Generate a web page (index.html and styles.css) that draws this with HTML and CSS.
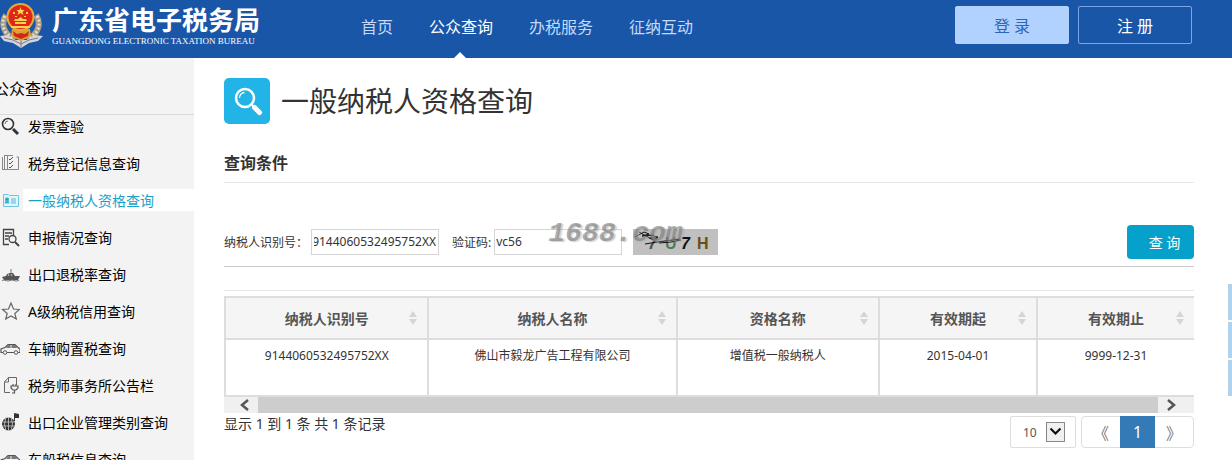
FILE: index.html
```html
<!DOCTYPE html>
<html lang="zh-CN">
  <head>
    <meta charset="UTF-8" />
    <meta name="viewport" content="width=device-width, initial-scale=1.0" />
    <title>广东省电子税务局</title>
    <link rel="stylesheet" href="styles.css">
  </head>
  <body>
    <header class="header">
      <div class="logo">
        <svg class="emblem" viewBox="0 0 44 48" aria-hidden="true">
          <path d="M6 15C0 24 4 34 15 40M36 15c6 9 2 19-9 25" fill="none" stroke="#a99b85" stroke-width="6" />
          <path d="M5 16C0 24 4 34 14 39M37 16c5 8 1 18-9 23" fill="none" stroke="#e6dfcf" stroke-width="3" stroke-dasharray="2 2" />
          <path d="M0 36l8-1 7 5h12l7-5 9 1-5 5-9 2-8 5-8-5-9-2z" fill="#d3d5da" />
          <path d="M4 38l9 2 8 4 8-4 9-2M21 41v6" fill="none" stroke="#747b8b" stroke-width="1" />
          <path d="M12 29h18l1 7-10 5-10-5z" fill="#d8a52f" />
          <path d="M13 31l4 3 4-1 4 1 4-3-1 5-7 3-7-3z" fill="#d3271e" />
          <circle cx="20.500" cy="17" r="14" fill="#e8a83a" />
          <circle cx="20.500" cy="17" r="12" fill="#e0261a" />
          <path d="M20.500 7l1 3h3l-2 2 1 3-3-2-3 2 1-3-2-2h3z" fill="#ffd84a" />
          <path d="M13 12h2v2h-2zM26 12h2v2h-2zM15 16h2v1h-2zM24 16h2v1h-2zM14 21h13l-1-2h-3l-2.500-2-2.500 2h-3zM15 22h11v2H15zM11 26h19v2H11z" fill="#ffd04a" />
        </svg>
        <div class="logo-text">
          <div class="logo-cn">广东省电子税务局</div>
          <div class="logo-en">GUANGDONG ELECTRONIC TAXATION BUREAU</div>
        </div>
      </div>
      <nav class="nav">
        <a href="#">首页</a>
        <a href="#" class="current">公众查询</a>
        <a href="#">办税服务</a>
        <a href="#">征纳互动</a>
      </nav>
      <div class="account">
        <button class="login">登 录</button>
        <button class="register">注 册</button>
      </div>
    </header>

    <div class="page">
      <aside class="sidebar">
        <div class="sidebar-title">公众查询</div>
        <ul class="menu">
          <li>
            <svg class="icon" viewBox="0 0 20 20"><circle cx="8" cy="8" r="5.5" fill="none" stroke="#333" stroke-width="1.6" /><path d="M5 8a3 3 0 0 1 3-3" fill="none" stroke="#777" /><path d="M13 13l5 5" stroke="#333" stroke-width="3" /></svg>
            <a href="#">发票查验</a>
          </li>
          <li>
            <svg class="icon" viewBox="0 0 20 20"><path d="M2.500 4v13M4.500 2v14M5 2.500h8M2 16.500h16.500V4M7.500 3v13M16.500 4h2" fill="none" stroke="#888" /><path d="M9 6l1 1 3-3M9 10l1 1 3-3M9 14l1 1 3-3" fill="none" stroke="#555" /></svg>
            <a href="#">税务登记信息查询</a>
          </li>
          <li class="active">
            <svg class="icon" viewBox="0 0 20 20"><path d="M3.500 4.500h5l1 1h9v11h-15z" fill="#e3f4fa" stroke="#71c4df" /><path d="M5 13c0-3 4-3 4 0zM5.500 8h3v3h-3zM11 9h5M11 11h5M11 13h5" fill="#1a9fc8" stroke="#58b8d7" /></svg>
            <a href="#">一般纳税人资格查询</a>
          </li>
          <li>
            <svg class="icon" viewBox="0 0 20 20"><path d="M9 17.500H3.500v-15h10V8M5 6h7M5 9h4M5 12h3" fill="none" stroke="#444" stroke-width="1.300" /><circle cx="12.500" cy="12" r="3.500" fill="#f3f3f3" stroke="#444" stroke-width="1.300" /><path d="M15 15l4 4" stroke="#444" stroke-width="2" /></svg>
            <a href="#">申报情况查询</a>
          </li>
          <li>
            <svg class="icon" viewBox="0 0 20 20"><path d="M2 13l4-1 1-2 3-1h3l2 3h5l-2 4H4z" fill="#555" /><path d="M11 9V5M7 11h6M2 16.500q2-1 4 0t4 0 4 0 5 0" fill="none" stroke="#777" /><path d="M8 11h1M11 11h1" stroke="#f3f3f3" /></svg>
            <a href="#">出口退税率查询</a>
          </li>
          <li>
            <svg class="icon" viewBox="0 0 20 20"><path d="M11 2l2.500 6 6 .5-4.700 4 1.500 5.500-5.300-3-5.300 3 1.500-5.500L2.500 8.500l6-.5z" fill="none" stroke="#666" stroke-width="1.200" /></svg>
            <a href="#">A级纳税信用查询</a>
          </li>
          <li>
            <svg class="icon" viewBox="0 0 20 20"><path d="M3 14.500H1V11l4-1.500 3-3h7l3 3 2 1.500v3.500h-2M7 14.500h7" fill="none" stroke="#555" stroke-width="1.200" /><path d="M6 10l2.500-3h2v3zM11.500 7H15l2 3h-5.500z" fill="#777" /><circle cx="5" cy="14.500" r="1.800" fill="none" stroke="#555" /><circle cx="16" cy="14.500" r="1.800" fill="none" stroke="#555" /></svg>
            <a href="#">车辆购置税查询</a>
          </li>
          <li>
            <svg class="icon" viewBox="0 0 20 20"><path d="M10 17.500H4.500V7l4-4.500h8V10M4.500 7h4V2.500" fill="none" stroke="#666" /><path d="M11 11h7v2l-2 2h-3l-2-2zM14.500 15v3H12M13 9v2M16 9v2" fill="none" stroke="#555" stroke-width="1.200" /></svg>
            <a href="#">税务师事务所公告栏</a>
          </li>
          <li>
            <svg class="icon" viewBox="0 0 20 20"><circle cx="8.500" cy="12" r="6.500" fill="#333" /><path d="M2 10h13M2 14h13M8.500 5v14M6 5q-3 7 0 14M11 5q3 7 0 14" fill="none" stroke="#ccc" stroke-width=".8" /><path d="M14 9V1l5 1v4h-4v3z" fill="#333" /></svg>
            <a href="#">出口企业管理类别查询</a>
          </li>
          <li>
            <svg class="icon" viewBox="0 0 20 20"><path d="M3 14.500H1V11l4-1.500 3-3h7l3 3 2 1.500v3.500h-2M7 14.500h7" fill="none" stroke="#555" stroke-width="1.200" /><path d="M6 10l2.500-3h2v3zM11.500 7H15l2 3h-5.500z" fill="#777" /></svg>
            <a href="#">车船税信息查询</a>
          </li>
        </ul>
      </aside>

      <main class="content">
        <h1>
          <svg class="title-icon" viewBox="0 0 46 46" aria-hidden="true">
            <rect width="46" height="46" rx="5" fill="#22b4e6" />
            <circle cx="21" cy="20" r="9" fill="none" stroke="#fff" stroke-width="2.500" />
            <path d="M15.500 20a5.500 5.500 0 0 1 5-5.500" fill="none" stroke="#fff" stroke-width="1.300" />
            <path d="M27 26l3 3" stroke="#fff" stroke-width="2" />
            <path d="M30.500 29.500l5 5" stroke="#fff" stroke-width="5" stroke-linecap="round" />
          </svg>
          一般纳税人资格查询
        </h1>
        <h2>查询条件</h2>

        <form class="search">
          <label for="taxId">纳税人识别号：</label>
          <input type="text" id="taxId" class="tax-id" value="9144060532495752XX" />
          <label for="code" class="code-label">验证码:</label>
          <div class="code-box">
            <input type="text" id="code" value="vc56" />
            <span class="watermark">1688.com</span>
          </div>
          <svg class="captcha" viewBox="0 0 85 26">
            <rect width="85" height="26" fill="#c0c0c0" />
            <g font-family="Liberation Sans, sans-serif" font-weight="bold" font-size="16">
              <text x="15" y="20" fill="#46534c" font-style="italic">7</text>
              <text x="32" y="20" fill="#527a5b">U</text>
              <text x="48" y="20" fill="#111" font-style="italic">7</text>
              <text x="64" y="20" fill="#695016">H</text>
            </g>
            <path d="M2 8l9-5 5 2-7 2 12-1M6 3l14 8 5-3-10-2M12 15l12-2 23-3M26 14l12-1 10-2" fill="none" stroke="#111" />
          </svg>
          <button type="button" class="query">查 询</button>
        </form>

        <div class="result">
          <table>
            <thead>
              <tr>
                <th class="col-id">纳税人识别号<svg class="sort" viewBox="0 0 8 14"><path d="M0 6l4-6 4 6zM0 8h8l-4 6z" /></svg></th>
                <th class="col-name">纳税人名称<svg class="sort" viewBox="0 0 8 14"><path d="M0 6l4-6 4 6zM0 8h8l-4 6z" /></svg></th>
                <th class="col-type">资格名称<svg class="sort" viewBox="0 0 8 14"><path d="M0 6l4-6 4 6zM0 8h8l-4 6z" /></svg></th>
                <th class="col-date">有效期起<svg class="sort" viewBox="0 0 8 14"><path d="M0 6l4-6 4 6zM0 8h8l-4 6z" /></svg></th>
                <th>有效期止<svg class="sort" viewBox="0 0 8 14"><path d="M0 6l4-6 4 6zM0 8h8l-4 6z" /></svg></th>
              </tr>
            </thead>
            <tbody>
              <tr>
                <td>9144060532495752XX</td>
                <td>佛山市毅龙广告工程有限公司</td>
                <td>增值税一般纳税人</td>
                <td>2015-04-01</td>
                <td>9999-12-31</td>
              </tr>
            </tbody>
          </table>
          <div class="scrollbar">
            <button aria-label="向左"><svg viewBox="0 0 10 12"><path d="M9 1L3 6l6 5" /></svg></button>
            <div class="thumb"></div>
            <button aria-label="向右"><svg viewBox="0 0 10 12"><path d="M1 1l6 5-6 5" /></svg></button>
          </div>
        </div>

        <div class="table-footer">
          <div class="info">显示 1 到 1 条 共 1 条记录</div>
          <div class="length">
            <select aria-label="每页条数">
              <option>10</option>
              <option>25</option>
              <option>50</option>
            </select>
            <svg class="arrow" viewBox="0 0 19 20"><rect x=".5" y=".5" width="18" height="19" fill="#f0f0f0" stroke="#888" /><path d="M4.500 6.500l5 5 5-5" fill="none" stroke="#111" stroke-width="2.200" /></svg>
          </div>
          <div class="pager">
            <a href="#">《</a>
            <a href="#" class="on">1</a>
            <a href="#">》</a>
          </div>
        </div>
      </main>
    </div>

    <div class="side-tools">
      <span></span>
      <span></span>
      <span></span>
    </div>
  </body>
</html>
```
FILE: styles.css
```css
* {
  box-sizing: border-box;
}
body {
  margin: 0;
  height: 100vh;
  overflow: hidden;
  display: flex;
  flex-direction: column;
  font-family: "Noto Sans", "Noto Sans CJK SC", sans-serif;
  font-size: 12px;
  color: #333;
  background: #fff;
}
a {
  text-decoration: none;
  color: inherit;
}
button,
input,
select {
  font-family: inherit;
  font-size: inherit;
  color: inherit;
}

/* header */
.header {
  flex: none;
  display: flex;
  height: 58px;
  padding-right: 40px;
  background: #1956a8;
}
.logo {
  display: flex;
  width: 361px;
  gap: 8px;
  color: #fff;
}
.emblem {
  width: 44px;
  height: 48px;
}
.logo-text {
  padding-top: 6px;
  white-space: nowrap;
}
.logo-cn {
  font-size: 26px;
  font-weight: bold;
  line-height: 29px;
}
.logo-en {
  font-family: "Liberation Serif", serif;
  font-size: 9px;
  line-height: 12px;
}
.nav {
  display: flex;
  gap: 36px;
  font-size: 16px;
  line-height: 54px;
  color: #c3dafb;
}
.nav .current {
  position: relative;
  color: #fff;
}
.nav .current::after {
  content: "";
  position: absolute;
  left: 50%;
  bottom: 0;
  margin-left: -7px;
  border: 6px solid transparent;
  border-top: 0;
  border-bottom-color: #fff;
}
.account {
  display: flex;
  gap: 9px;
  margin-left: auto;
  padding-top: 6px;
}
.account button {
  width: 114px;
  height: 38px;
  padding: 0;
  border: 1px solid #7ba6e3;
  border-radius: 2px;
  font-size: 16px;
  background: none;
  color: #fff;
}
.account .login {
  background: #b1d2ff;
  border-color: #b1d2ff;
  color: #2c66b8;
}

/* left menu */
.page {
  flex: 1;
  display: flex;
  min-height: 0;
}
.sidebar {
  flex: none;
  width: 194px;
  overflow: hidden;
  background: #f3f3f3;
  color: #000;
}
.sidebar-title {
  height: 57px;
  margin-left: -7px;
  border-bottom: 1px solid #d9d9d9;
  font-size: 16px;
  line-height: 62px;
}
.menu {
  margin: 0;
  padding: 0;
  list-style: none;
  font-size: 14px;
  line-height: 22px;
}
.menu li {
  display: flex;
  align-items: center;
  gap: 3px;
  margin-bottom: 15px;
}
.menu a {
  flex: 1;
  height: 22px;
  padding-left: 5px;
  line-height: 24px;
}
.menu .active a {
  background: #fff;
  color: #1a9fc8;
}
.icon {
  width: 20px;
  height: 20px;
}

/* content */
.content {
  flex: 1;
  min-width: 0;
  padding: 20px 38px 0 30px;
}
h1 {
  display: flex;
  align-items: center;
  gap: 11px;
  height: 46px;
  margin: 0;
  font-size: 28px;
  font-weight: normal;
  line-height: 48px;
}
.title-icon {
  width: 46px;
  height: 46px;
}
h2 {
  margin: 24px 0 0;
  padding-bottom: 4px;
  border-bottom: 1px solid #e8e8e8;
  font-size: 16px;
  line-height: 30px;
}
.search {
  display: flex;
  align-items: center;
  height: 84px;
  padding-top: 34px;
  border-bottom: 1px solid #ccc;
}
.search label {
  white-space: nowrap;
}
.search input {
  width: 128px;
  height: 26px;
  padding: 0 2px;
  border: 1px solid #d5d5d5;
}
.search .tax-id {
  margin-left: 3px;
  direction: rtl;
}
.code-label {
  margin-left: 13px;
}
.code-box {
  position: relative;
  margin: 0 11px 0 3px;
}
.code-box input {
  padding: 0 1px;
}
.watermark {
  position: absolute;
  left: 54px;
  top: -11px;
  font-family: "Liberation Mono", monospace;
  font-size: 28px;
  font-style: italic;
  font-weight: bold;
  line-height: 32px;
  color: rgba(120, 120, 120, 0.6);
  text-shadow: 2px 1px 1px rgba(170, 170, 170, 0.5);
}
.captcha {
  width: 85px;
  height: 26px;
}
.query {
  width: 67px;
  height: 34px;
  margin-left: auto;
  padding: 0 0 0 8px;
  border: 0;
  border-radius: 4px;
  font-size: 14px;
  background: #06a1ca;
  color: #fff;
}

/* result table */
.result {
  margin-top: 23px;
  padding-top: 5px;
  border-top: 1px solid #e8e8e8;
}
table {
  width: 100%;
  table-layout: fixed;
  border-collapse: collapse;
}
th,
td {
  border: 2px solid #ddd;
  text-align: center;
}
th:last-child,
td:last-child {
  border-right: 0;
}
th {
  position: relative;
  height: 42px;
  padding: 0;
  font-size: 14px;
  color: #555;
  background: #f5f5f5;
}
td {
  height: 57px;
  padding: 7px 0;
  line-height: 18px;
  vertical-align: top;
}
.col-id {
  width: 21%;
}
.col-name {
  width: 25.6%;
}
.col-type {
  width: 20.9%;
}
.col-date {
  width: 16.3%;
}
.sort {
  position: absolute;
  right: 10px;
  top: 13px;
  width: 8px;
  height: 14px;
  fill: #d5d5d5;
}
.scrollbar {
  display: flex;
  height: 16px;
  background: #f0f0f0;
}
.scrollbar button {
  display: flex;
  align-items: center;
  width: 36px;
  padding: 0 9px;
  border: 0;
  background: none;
}
.scrollbar button:first-child {
  justify-content: flex-end;
  width: 34px;
}
.scrollbar svg {
  width: 10px;
  height: 12px;
  fill: none;
  stroke: #555;
  stroke-width: 2.5;
}
.thumb {
  flex: 1;
  background: #cdcdcd;
}

/* paging */
.table-footer {
  display: flex;
  padding-top: 3px;
}
.info {
  font-size: 14px;
  line-height: 16px;
}
.length {
  position: relative;
  width: 66px;
  height: 32px;
  margin-left: auto;
}
.length select {
  appearance: none;
  width: 100%;
  height: 100%;
  padding: 0 12px;
  border: 1px solid #ddd;
  border-radius: 2px;
  background: #fff;
  color: #555;
}
.arrow {
  position: absolute;
  right: 11px;
  top: 6px;
  width: 19px;
  height: 20px;
  pointer-events: none;
}
.pager {
  display: flex;
  width: 113px;
  height: 32px;
  margin-left: 5px;
  border: 1px solid #ddd;
  border-radius: 4px;
  font-size: 16px;
  line-height: 32px;
  text-align: center;
  color: #777;
}
.pager a {
  flex: 1;
}
.pager .on {
  flex: none;
  width: 35px;
  height: 32px;
  margin: -1px 0;
  background: #337ab7;
  color: #fff;
}

/* floating tools on the right edge */
.side-tools {
  position: fixed;
  right: 0;
  top: 284px;
  display: flex;
  flex-direction: column;
  gap: 2px;
}
.side-tools span {
  width: 4px;
  height: 36px;
  background: #afd2ee;
}
```
